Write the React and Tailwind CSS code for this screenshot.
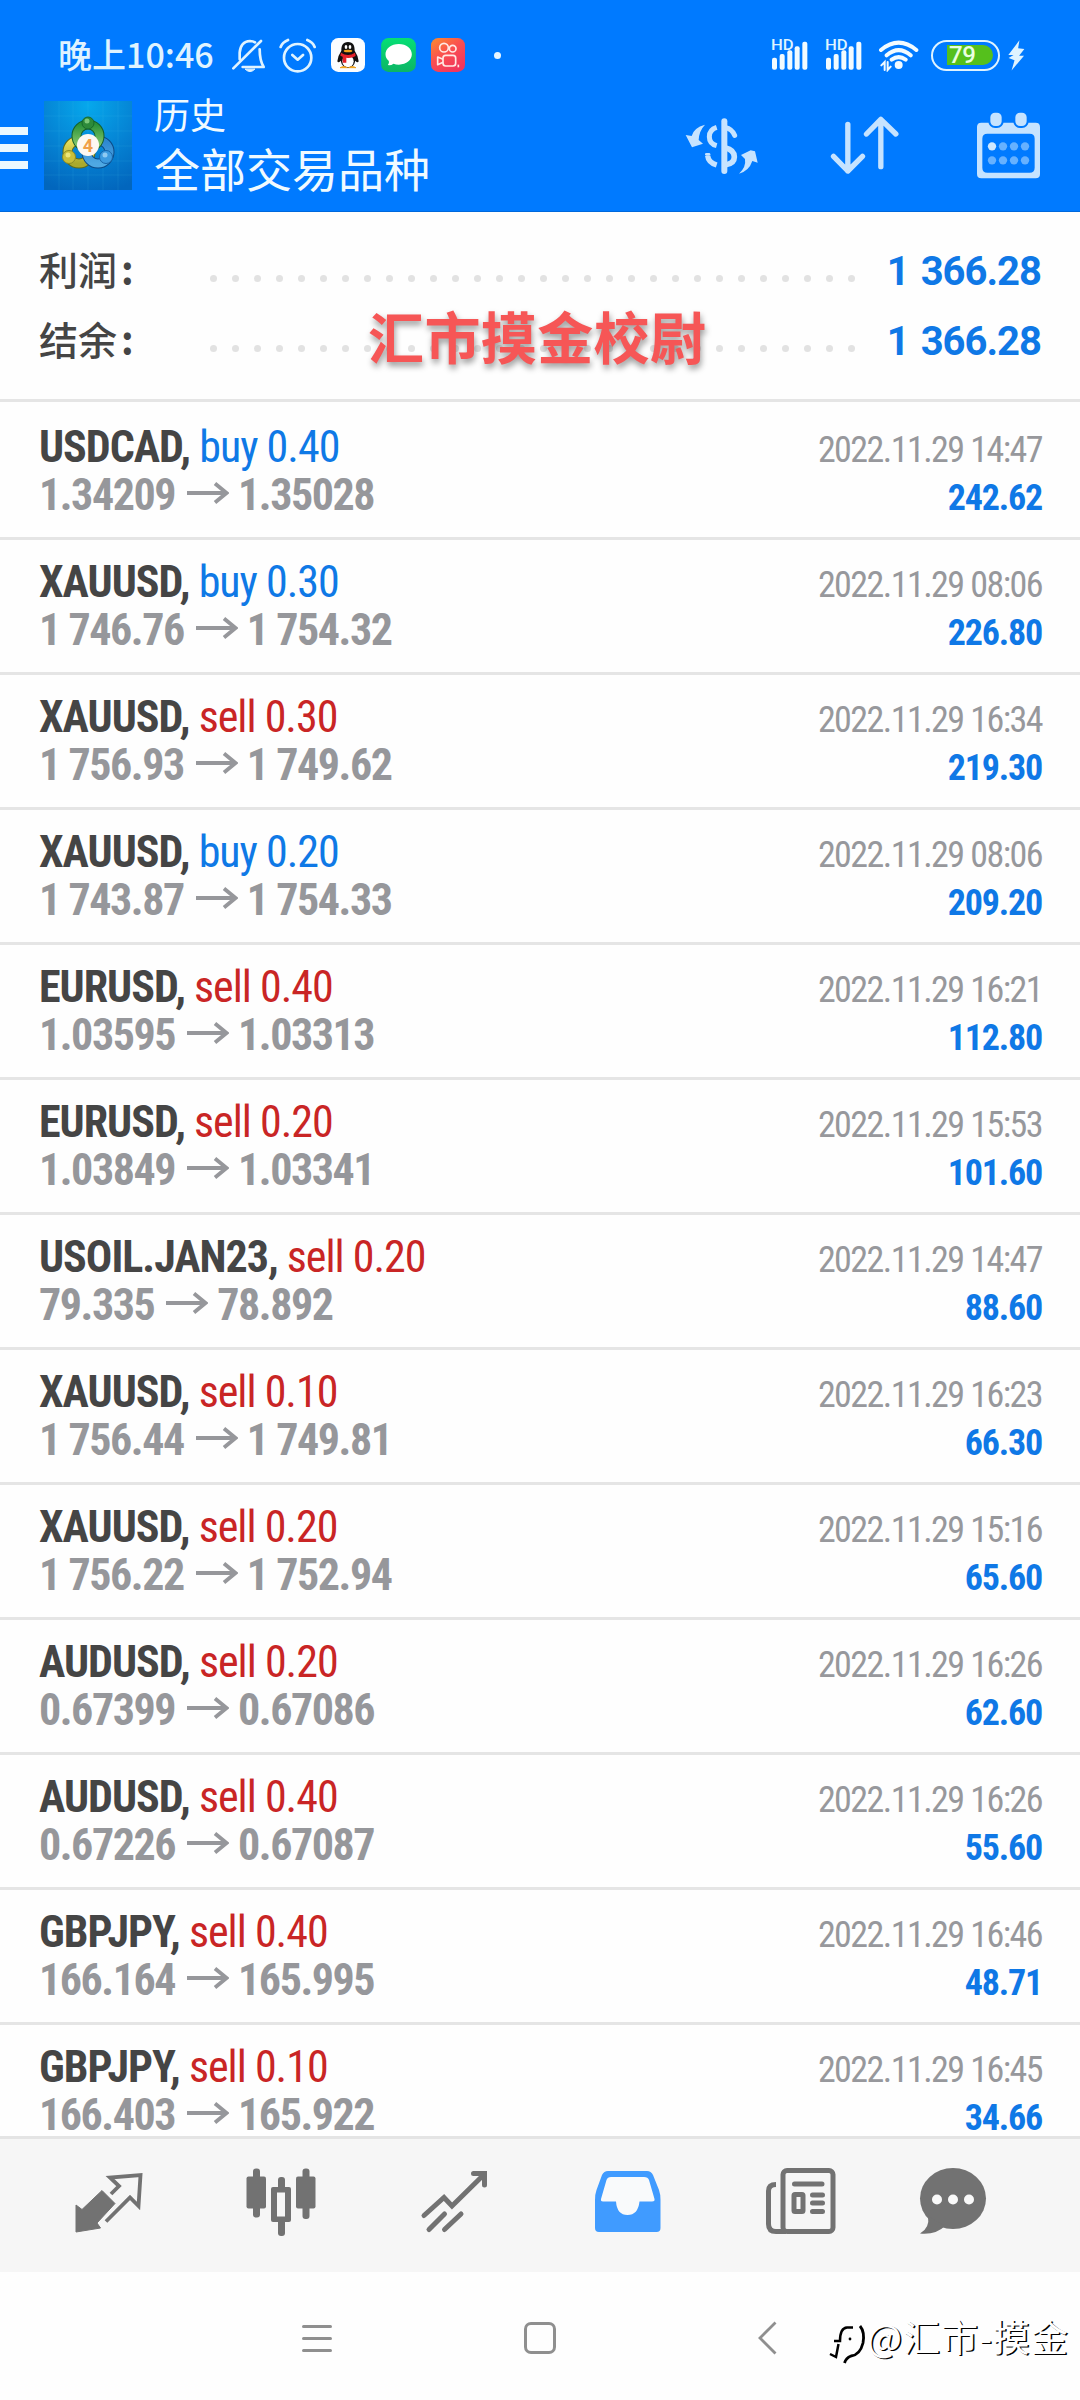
const trades = [
  { symbol: 'USDCAD',      side: 'buy',  lots: '0.40', open: '1.34209',  close: '1.35028',  time: '2022.11.29 14:47', profit: '242.62' },
  { symbol: 'XAUUSD',      side: 'buy',  lots: '0.30', open: '1 746.76', close: '1 754.32', time: '2022.11.29 08:06', profit: '226.80' },
  { symbol: 'XAUUSD',      side: 'sell', lots: '0.30', open: '1 756.93', close: '1 749.62', time: '2022.11.29 16:34', profit: '219.30' },
  { symbol: 'XAUUSD',      side: 'buy',  lots: '0.20', open: '1 743.87', close: '1 754.33', time: '2022.11.29 08:06', profit: '209.20' },
  { symbol: 'EURUSD',      side: 'sell', lots: '0.40', open: '1.03595',  close: '1.03313',  time: '2022.11.29 16:21', profit: '112.80' },
  { symbol: 'EURUSD',      side: 'sell', lots: '0.20', open: '1.03849',  close: '1.03341',  time: '2022.11.29 15:53', profit: '101.60' },
  { symbol: 'USOIL.JAN23', side: 'sell', lots: '0.20', open: '79.335',   close: '78.892',   time: '2022.11.29 14:47', profit: '88.60' },
  { symbol: 'XAUUSD',      side: 'sell', lots: '0.10', open: '1 756.44', close: '1 749.81', time: '2022.11.29 16:23', profit: '66.30' },
  { symbol: 'XAUUSD',      side: 'sell', lots: '0.20', open: '1 756.22', close: '1 752.94', time: '2022.11.29 15:16', profit: '65.60' },
  { symbol: 'AUDUSD',      side: 'sell', lots: '0.20', open: '0.67399',  close: '0.67086',  time: '2022.11.29 16:26', profit: '62.60' },
  { symbol: 'AUDUSD',      side: 'sell', lots: '0.40', open: '0.67226',  close: '0.67087',  time: '2022.11.29 16:26', profit: '55.60' },
  { symbol: 'GBPJPY',      side: 'sell', lots: '0.40', open: '166.164',  close: '165.995',  time: '2022.11.29 16:46', profit: '48.71' },
  { symbol: 'GBPJPY',      side: 'sell', lots: '0.10', open: '166.403',  close: '165.922',  time: '2022.11.29 16:45', profit: '34.66' },
];

const summary = [
  { label: '利润', value: '1 366.28' },
  { label: '结余', value: '1 366.28' },
];

/* ---------- Status bar icons ---------- */

function BellOff() {
  return (
    <svg className="w-[33px] h-[35px]" viewBox="34 20 99 105" fill="none" stroke="#dff3ff" strokeWidth="8" strokeLinecap="round" strokeLinejoin="round">
      <path d="M57 84V64Q60 30 88 29Q97 29 103 33M38 111L121 29M117 54Q117 88 129 107H66" />
      <path d="M74 114Q88 128 102 114Z" fill="#dff3ff" strokeWidth="3" />
    </svg>
  );
}

function Alarm() {
  return (
    <svg className="w-[37px] h-[36px]" viewBox="178 20 111 108" fill="none" stroke="#dff3ff" strokeWidth="8" strokeLinecap="round" strokeLinejoin="round">
      <circle cx="234" cy="82" r="41" />
      <path d="M218 74L234 88L250 74M183 50Q188 36 205 29M263 29Q280 36 285 50" />
    </svg>
  );
}

function Penguin() {
  return (
    <svg className="w-[34px] h-[34px]" viewBox="0 0 102 102">
      <rect width="102" height="102" rx="22" fill="#fbfdff" />
      <path d="M51 12C35 12 31 24 31 38Q20 54 19 70Q22 76 29 68Q33 88 51 90Q69 88 73 68Q80 76 83 70Q82 54 71 38C71 24 67 12 51 12Z" fill="#111" />
      <ellipse cx="51" cy="70" rx="17" ry="18" fill="#fff" />
      <ellipse cx="45" cy="27" rx="4" ry="6" fill="#fff" />
      <ellipse cx="57" cy="27" rx="4" ry="6" fill="#fff" />
      <ellipse cx="51" cy="39" rx="13" ry="4" fill="#f0a21c" />
      <path d="M30 44Q51 58 72 44L74 54Q60 62 46 59V74H35V56L28 53Z" fill="#e5222b" />
      <path d="M27 89Q38 82 49 89ZM53 89Q64 82 75 89Z" fill="#f0a21c" stroke="#f0a21c" strokeWidth="3" />
    </svg>
  );
}

function Messages() {
  return (
    <svg className="w-[35px] h-[34px]" viewBox="0 0 104 102">
      <defs>
        <linearGradient id="msg" x1="0" y1="0" x2="0" y2="1">
          <stop offset="0" stopColor="#06df75" />
          <stop offset="1" stopColor="#0cb565" />
        </linearGradient>
      </defs>
      <rect width="104" height="102" rx="22" fill="url(#msg)" />
      <path d="M53 18C76 18 92 32 92 49S76 80 53 80Q44 80 37 77Q29 83 20 81Q25 76 23 69Q13 61 13 49C13 32 30 18 53 18Z" fill="#fff" />
    </svg>
  );
}

function Camera() {
  return (
    <svg className="w-[34px] h-[34px]" viewBox="0 0 102 102">
      <defs>
        <linearGradient id="cam" x1="0" y1="0" x2="0.7" y2="1">
          <stop offset="0" stopColor="#fb8d2e" />
          <stop offset="0.5" stopColor="#fa4f50" />
          <stop offset="1" stopColor="#f0355d" />
        </linearGradient>
      </defs>
      <rect width="102" height="102" rx="22" fill="url(#cam)" />
      <g fill="none" stroke="#ffe9e4" strokeWidth="5" strokeLinejoin="round">
        <circle cx="39" cy="29" r="13" />
        <circle cx="65" cy="32" r="10" />
        <rect x="36" y="52" width="38" height="32" rx="8" />
        <path d="M36 64L20 57V80L36 73" />
        <path d="M82 80V88" />
      </g>
    </svg>
  );
}

function Signal() {
  return (
    <svg className="w-[38px] h-[36px] overflow-visible" viewBox="28 18 114 108" fill="#f2fbff">
      <rect x="31" y="80" width="15" height="36" rx="6" />
      <rect x="54" y="69" width="15" height="47" rx="6" />
      <rect x="77" y="58" width="15" height="58" rx="6" />
      <rect x="99" y="46" width="15" height="70" rx="6" />
      <rect x="122" y="32" width="15" height="84" rx="6" />
      <text x="28" y="58" fontSize="42" fontFamily="Roboto, sans-serif" fontWeight="500" fill="#dff3ff" textLength="68" lengthAdjust="spacingAndGlyphs">HD</text>
    </svg>
  );
}

function Wifi() {
  return (
    <svg className="w-[41px] h-[34px]" viewBox="352 25 123 102" fill="none" stroke="#f2fbff" strokeWidth="12" strokeLinecap="round">
      <path d="M361 61Q414 17 467 61M378 77Q414 46 450 77M393 90Q414 75 435 90" />
      <circle cx="414" cy="106" r="12" fill="#f2fbff" stroke="none" />
      <path d="M372 121V97L362 107M381 97V121L390 111" strokeWidth="6" />
    </svg>
  );
}

function Bolt() {
  return (
    <svg className="w-[18px] h-[31px]" viewBox="741 29 55 93" fill="#dff3ff">
      <path d="M779 29L745 74H761L746 83L764 90L755 121L793 76H778L794 56L775 53Z" />
    </svg>
  );
}

/* ---------- Toolbar icons ---------- */

function AppLogo() {
  return (
    <svg className="w-[88px] h-[89px] ml-4 shrink-0" viewBox="0 0 88 89">
      <defs>
        <radialGradient id="logoBg" cx="0.5" cy="0.05" r="1">
          <stop offset="0" stopColor="#06a8ec" />
          <stop offset="0.55" stopColor="#0582d3" />
          <stop offset="1" stopColor="#0266bd" />
        </radialGradient>
        <linearGradient id="green" x1="0" y1="0" x2="0" y2="1">
          <stop offset="0" stopColor="#2a9239" />
          <stop offset="1" stopColor="#8fce72" />
        </linearGradient>
        <linearGradient id="yellow" x1="0" y1="0" x2="0" y2="1">
          <stop offset="0" stopColor="#e9e05d" />
          <stop offset="1" stopColor="#aba92c" />
        </linearGradient>
        <linearGradient id="azure" x1="0" y1="0" x2="0" y2="1">
          <stop offset="0" stopColor="#2d86d0" />
          <stop offset="1" stopColor="#4fa8e2" />
        </linearGradient>
      </defs>
      <rect width="88" height="89" fill="url(#logoBg)" />
      <path d="M15 0V89M29 0V89M44 0V89M59 0V89M74 0V89M0 15H88M0 30H88M0 45H88M0 60H88M0 74H88" stroke="#4fc3f2" strokeOpacity="0.12" />
      <circle cx="35" cy="51" r="11.500" fill="none" stroke="#5d6b1c" strokeWidth="10" />
      <circle cx="35" cy="51" r="11.500" fill="none" stroke="url(#yellow)" strokeWidth="8" />
      <circle cx="54" cy="51" r="11.500" fill="none" stroke="#0c4a86" strokeWidth="10" />
      <circle cx="54" cy="51" r="11.500" fill="none" stroke="url(#azure)" strokeWidth="8" />
      <circle cx="44" cy="35" r="11.500" fill="none" stroke="#155f2a" strokeWidth="10" />
      <circle cx="44" cy="35" r="11.500" fill="none" stroke="url(#green)" strokeWidth="8" />
      <circle cx="44" cy="22" r="6" fill="#2d8a3a" stroke="#176a2b" />
      <circle cx="25" cy="56" r="6.500" fill="#c9bf3a" stroke="#8a8a24" />
      <circle cx="62" cy="56" r="6.500" fill="#3d9be0" stroke="#1763a8" />
      <circle cx="43" cy="20" r="2.500" fill="#7cc878" />
      <circle cx="24" cy="54" r="2.500" fill="#ece679" />
      <circle cx="61" cy="54" r="2.500" fill="#8fcaf2" />
      <circle cx="44" cy="44" r="11" fill="#fdf8f2" />
      <text x="44" y="50.500" textAnchor="middle" fontSize="18" fontWeight="700" fontFamily="Roboto, sans-serif" fill="#f0a04a">4</text>
    </svg>
  );
}

function CurrencyIcon() {
  return (
    <svg className="w-[73px] h-[58px]" viewBox="16 46 219 174" fill="none" stroke="#c6e3ff">
      <path d="M134 59V208" strokeWidth="18" strokeLinecap="round" />
      <path d="M111 77Q89 84 89 105T111 132" strokeWidth="15" />
      <path d="M84 162Q86 182 111 190" strokeWidth="16" />
      <path d="M80 158H88" strokeWidth="8" strokeLinecap="round" />
      <path d="M136 77Q158 82 165 101" strokeWidth="15" strokeLinecap="round" />
      <path d="M136 138Q164 144 164 166Q164 186 136 190" strokeWidth="17" />
      <path d="M76 69Q42 78 36 103L18 100L37 137L70 126L57 115Q58 88 76 69Z" fill="#c6e3ff" stroke="none" />
      <path d="M178 216Q200 196 196 172L184 160L213 146L226 149L234 183L218 178Q208 208 178 216Z" fill="#c6e3ff" stroke="none" />
    </svg>
  );
}

function SortIcon() {
  return (
    <svg className="w-[69px] h-[61px]" viewBox="451.500 46 207 183" fill="none" stroke="#c6e3ff" strokeWidth="16" strokeLinecap="round" strokeLinejoin="round">
      <path d="M505 74V214M462 170L505 214L549 170M604 201V59M561 103L604 59L649 103" />
    </svg>
  );
}

function CalendarIcon() {
  return (
    <svg className="w-[65px] h-[67px]" viewBox="888 34 195 201">
      <path fillRule="evenodd" fill="#c6e3ff" d="M904 66H1067Q1080 66 1080 79V220Q1080 233 1067 233H904Q891 233 891 220V79Q891 66 904 66ZM922 99Q907 99 907 114V201Q907 216 922 216H1049Q1064 216 1064 201V114Q1064 99 1049 99Z" />
      <rect x="928" y="33" width="40" height="46" rx="17" fill="#c6e3ff" stroke="#007aff" strokeWidth="6" />
      <rect x="1003" y="33" width="40" height="46" rx="17" fill="#c6e3ff" stroke="#007aff" strokeWidth="6" />
      <g fill="#66b1ff">
        <circle cx="936" cy="137" r="12.500" fill="#cfe8ff" />
        <circle cx="969" cy="137" r="12.500" />
        <circle cx="1002" cy="137" r="12.500" />
        <circle cx="1035" cy="137" r="12.500" />
        <circle cx="936" cy="179" r="12.500" />
        <circle cx="969" cy="179" r="12.500" />
        <circle cx="1002" cy="179" r="12.500" />
        <circle cx="1035" cy="179" r="12.500" />
      </g>
    </svg>
  );
}

/* ---------- Header ---------- */

function Header() {
  return (
    <header className="h-[212px] bg-[#007aff] border-b border-[#0068dc] text-white">
      <div className="h-[95px] pt-[15px] pl-[58px] pr-[55px] flex items-center">
        <span className="w-[174px] mb-[3px] text-[34px] leading-none font-medium text-[#dff3ff] font-['Noto_Sans_CJK_SC',sans-serif] whitespace-nowrap">晚上10:46</span>
        <div className="flex items-center">
          <BellOff />
          <span className="ml-[14px]"><Alarm /></span>
          <span className="ml-[15px]"><Penguin /></span>
          <span className="ml-4"><Messages /></span>
          <span className="ml-[15px]"><Camera /></span>
          <span className="ml-[29px] size-[7px] rounded-full bg-[#e8f6ff]" />
        </div>
        <div className="ml-auto flex items-center">
          <Signal />
          <span className="ml-4"><Signal /></span>
          <span className="ml-[15px]"><Wifi /></span>
          <div className="ml-3 w-[69px] h-[31px] rounded-full border-[2.5px] border-[#dff3ff] flex items-center pl-[14px]">
            <div className="w-[46px] h-[20px] rounded-l-[2px] rounded-r-full bg-[#55c01c] flex items-center pl-[2px]">
              <span className="text-[24px] leading-none font-medium font-['Roboto',sans-serif] tracking-[-0.5px] text-[#e9ffe0]">79</span>
            </div>
          </div>
          <span className="ml-[7px]"><Bolt /></span>
        </div>
      </div>

      <div className="h-[117px] pb-4 pr-[39px] flex items-center">
        <div className="w-7 mt-[5px] flex flex-col gap-[9px] shrink-0">
          <span className="h-2 bg-[#ebf8ff]" />
          <span className="h-2 bg-[#ebf8ff]" />
          <span className="h-2 bg-[#ebf8ff]" />
        </div>
        <AppLogo />
        <div className="ml-[22px] mb-2 font-['Noto_Sans_CJK_SC',sans-serif] text-[#f0faff] whitespace-nowrap">
          <p className="text-[36px] leading-[50px]">历史</p>
          <p className="text-[46px] leading-[58px]">全部交易品种</p>
        </div>
        <div className="ml-auto flex items-center">
          <CurrencyIcon />
          <span className="ml-[72px]"><SortIcon /></span>
          <span className="ml-[77px]"><CalendarIcon /></span>
        </div>
      </div>
    </header>
  );
}

/* ---------- Totals ---------- */

function Summary() {
  return (
    <section className="relative h-[190px] pt-[23px] pl-[39px] pr-[39px] border-b-3 border-[#e5e5e5]">
      {summary.map((row) => (
        <div key={row.label} className="h-[70px] flex items-center">
          <span className="w-[171px] mb-1 text-[39px] leading-none font-medium text-[#454545] font-['Noto_Sans_CJK_SC',sans-serif]">
            {row.label}<span className="ml-1 font-bold">:</span>
          </span>
          <span className="w-[645px] mt-[17px] flex justify-between">
            {Array.from({ length: 30 }, (_, i) => (
              <span key={i} className="size-[7px] rounded-full bg-[#e2e2e2]" />
            ))}
          </span>
          <span className="ml-auto mt-1 text-[40px] leading-none font-bold tracking-[-1px] [word-spacing:3px] text-[#0f78e6] font-['Roboto',sans-serif]">{row.value}</span>
        </div>
      ))}
      <span className="absolute left-[368px] top-[95px] text-[56px] leading-none font-bold tracking-[0.4px] whitespace-nowrap text-[#f65656] font-['Noto_Sans_CJK_SC',sans-serif] [text-shadow:1px_4px_6px_rgba(0,0,0,0.4)]">汇市摸金校尉</span>
    </section>
  );
}

function TradeRow({ trade }) {
  const color = trade.side === 'buy' ? 'text-[#0f79e6]' : 'text-[#c92525]';
  return (
    <div className="h-[135px] pt-[18px] pl-[39px] pr-[38px] border-b-3 border-[#e5e5e5] font-['Roboto_Condensed',sans-serif] whitespace-nowrap">
      <div className="h-12 flex items-baseline justify-between leading-[48px]">
        <p className="text-[44px] tracking-[-1px]">
          <span className="font-bold text-[#454545]">{trade.symbol},</span>{' '}
          <span className={color}>{trade.side} {trade.lots}</span>
        </p>
        <p className="text-[36px] tracking-[-1.55px] text-[#97989c]">{trade.time}</p>
      </div>
      <div className="h-12 flex items-baseline justify-between leading-[48px]">
        <p className="flex items-baseline text-[44px] tracking-[-1.45px] font-bold text-[#96979b]">
          {trade.open}
          <svg className="w-[42px] h-[22px] ml-3 mr-[9px] -translate-y-[6px]" viewBox="0 0 42 22" fill="none" stroke="currentColor" strokeWidth="3.800">
            <path d="M0 11H39M28 1.500L39.500 11L28 20.500" />
          </svg>
          {trade.close}
        </p>
        <p className="text-[36px] tracking-[-1.2px] font-bold text-[#0f78e6]">{trade.profit}</p>
      </div>
    </div>
  );
}

/* ---------- Bottom bars ---------- */

function TabBar() {
  return (
    <nav className="h-[136px] pl-[22px] border-t-3 border-[#e4e4e4] bg-[#f6f6f6] flex text-[#727272]">
      {/* Quotes */}
      <svg className="w-[173px] h-[133px]" viewBox="22 79 173 133" fill="currentColor">
        <path d="M76 172V145L82 149.500L102 130.500L115 143.500L97 163L100.500 168Z" stroke="currentColor" strokeLinejoin="round" />
        <path d="M111 134L119 126L110 117.500L140.500 115L138.500 146L130 137.500L106 161.500" fill="none" stroke="currentColor" strokeWidth="3.800" />
      </svg>
      {/* Chart */}
      <svg className="w-[173px] h-[133px]" viewBox="195 79 173 133" fill="currentColor">
        <rect x="253" y="108.500" width="7" height="49" rx="3" />
        <rect x="246.500" y="116.500" width="19.500" height="32" rx="2" />
        <rect x="278" y="117" width="7" height="59" rx="3" />
        <rect x="271" y="127" width="20" height="35" rx="2" />
        <rect x="277" y="132.500" width="8" height="24" fill="#f6f6f6" />
        <rect x="302.500" y="108.500" width="7" height="50.500" rx="3" />
        <rect x="296" y="116.500" width="19.500" height="32" rx="2" />
      </svg>
      {/* Trade */}
      <svg className="w-[173px] h-[133px]" viewBox="368 79 173 133" fill="none" stroke="currentColor" strokeWidth="5" strokeLinecap="round">
        <path d="M424 155.500L444 137.500L452 146L484 114.500M473.500 113.500H484.500V125M429 169.500L444.500 154M444.500 169.500L461 154" />
      </svg>
      {/* History */}
      <svg className="w-[173px] h-[133px]" viewBox="541 79 173 133" fill="#409bff">
        <path d="M608 111H647Q651 111 653 115L659 130Q660.500 134 660.500 140V168Q660.500 172 656.500 172H599Q595 172 595 168V140Q595 134 596.500 130L602 115Q604 111 608 111Z" />
        <path d="M611 117H644Q648 117 649 120L654.500 139Q655 141.500 652 141.500H639.500Q638 155 627.500 155T616 141.500H603Q600.500 141.500 601 139L606.500 120Q607.500 117 611 117Z" fill="#f9fafb" />
      </svg>
      {/* News */}
      <svg className="w-[173px] h-[133px]" viewBox="714 79 173 133" fill="none" stroke="currentColor" strokeWidth="5">
        <rect x="783" y="110.500" width="50" height="61" rx="4" />
        <path d="M776 124.500Q768.500 124.500 768.500 131V164Q768.500 171.500 776 171.500H786" />
        <path d="M794.500 124H822M812.500 135H822.500M812.500 143H822.500M812.500 151.500H822.500" strokeLinecap="round" />
        <rect x="794" y="134.500" width="9" height="17" rx="1" />
      </svg>
      {/* Messages */}
      <svg className="w-[173px] h-[133px]" viewBox="887 79 173 133" fill="currentColor">
        <ellipse cx="953" cy="138.500" rx="33" ry="30.500" />
        <path d="M928 156Q930 168 920 173.500Q936 175 945 166Z" />
        <circle cx="937" cy="139.500" r="5" fill="#f9f9f9" />
        <circle cx="953" cy="139.500" r="5" fill="#f9f9f9" />
        <circle cx="969" cy="139.500" r="5" fill="#f9f9f9" />
      </svg>
    </nav>
  );
}

function SystemNav() {
  return (
    <div className="relative h-[128px] pt-1 pl-[302px] bg-[#fefefe] flex items-center">
      <div className="w-[30px] flex flex-col gap-[9px]">
        <span className="h-[3px] rounded bg-[#8f8f8f]" />
        <span className="h-[3px] rounded bg-[#8f8f8f]" />
        <span className="h-[3px] rounded bg-[#8f8f8f]" />
      </div>
      <span className="ml-[192px] size-8 rounded-[7px] border-[3px] border-[#8f8f8f]" />
      <svg className="ml-[201px] w-5 h-[34px]" viewBox="0 0 20 34" fill="none" stroke="#8f8f8f" strokeWidth="2.800">
        <path d="M18.500 1.500L3 17L18.500 32.500" />
      </svg>

      <div className="absolute left-[829px] top-[40px] flex items-center text-white whitespace-nowrap">
        <svg className="w-[38px] h-[48px] overflow-visible" viewBox="0 0 38 48" fill="none">
          <path d="M5 29H11Q11 16 18 15.500H24M9.500 32L7 45L1 42" stroke="#000" strokeWidth="2.500" />
          <path d="M31 14Q36 20 34 31Q31 43 22 44Q17 46 15.500 51" stroke="#000" strokeWidth="2.800" />
          <circle cx="21" cy="27" r="1.400" fill="#000" />
        </svg>
        <span className="text-[37px] leading-[48px] tracking-[1px] font-['Noto_Sans_CJK_SC',sans-serif] [text-shadow:1.5px_1px_0_#000]">@汇市-摸金</span>
      </div>
    </div>
  );
}

export default function App() {
  return (
    <div className="w-[1080px] h-[2400px] bg-[#fefefe] flex flex-col overflow-hidden">
      <Header />
      <Summary />
      <main className="h-[1734px] pt-[3px] overflow-hidden">
        {trades.map((trade, i) => (
          <TradeRow key={i} trade={trade} />
        ))}
      </main>
      <TabBar />
      <SystemNav />
    </div>
  );
}
